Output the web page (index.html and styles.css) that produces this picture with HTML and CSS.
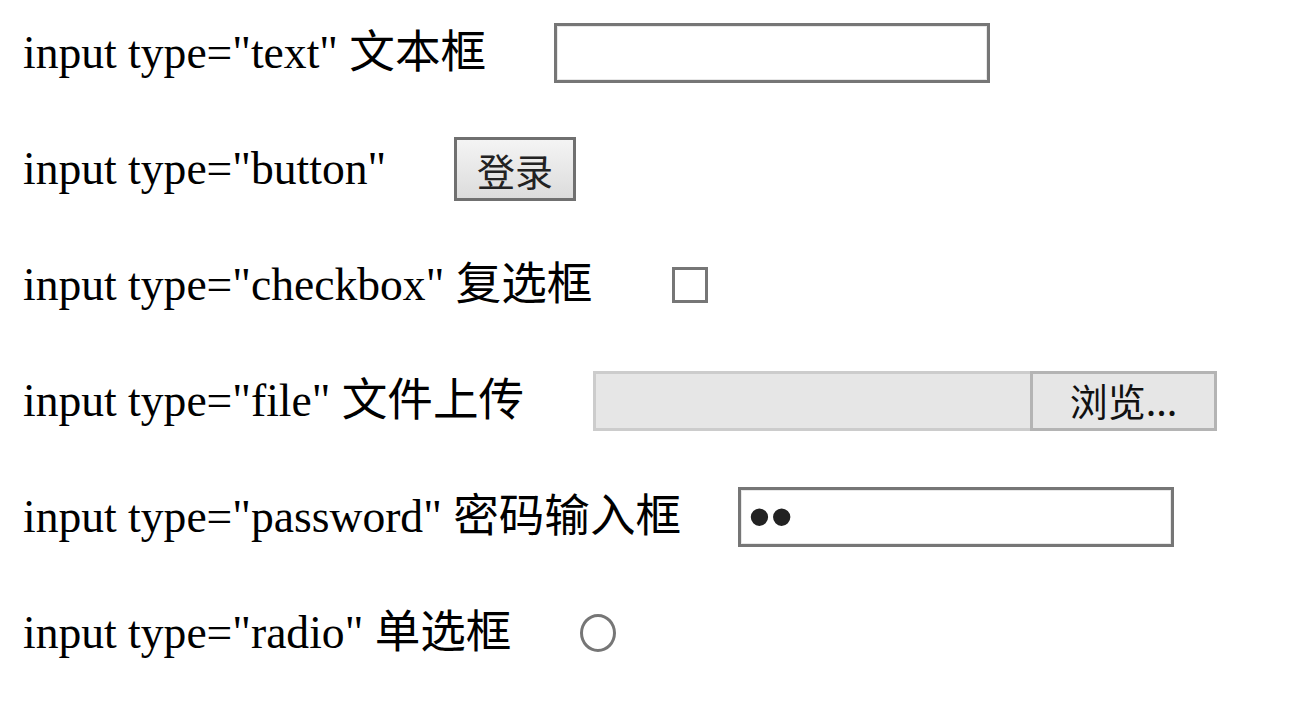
FILE: index.html
```html
<!DOCTYPE html>
<html>
<head>
    <meta charset="utf-8" />
    <title>input 表单元素</title>
    <link rel="stylesheet" href="styles.css">
</head>
<body>
    <div class="form">
        <div class="row">
            <span class="label">input type="text" 文本框</span>
            <input type="text" class="txt gap-text">
        </div>
        <div class="row">
            <span class="label">input type="button"</span>
            <input type="button" class="btn gap-btn" value="登录">
        </div>
        <div class="row">
            <span class="label">input type="checkbox" 复选框</span>
            <input type="checkbox" class="chk gap-chk">
        </div>
        <div class="row">
            <span class="label">input type="file" 文件上传</span>
            <div class="file gap-file">
                <span class="file-name"></span>
                <span class="file-btn">浏览...</span>
            </div>
        </div>
        <div class="row">
            <span class="label">input type="password" 密码输入框</span>
            <input type="password" class="txt pwd gap-pwd" value="12">
        </div>
        <div class="row">
            <span class="label">input type="radio" 单选框</span>
            <input type="radio" class="rad gap-rad">
        </div>
    </div>
</body>
</html>
```

FILE: styles.css
```css
body {
    margin: 0;
    padding: 0;
    background: #fff;
    font: 45.6px "Liberation Serif", "Noto Sans CJK SC", serif;
    color: #000;
}

.form {
    padding: 23px 0 0 23px;
}

.row {
    display: flex;
    align-items: center;
    height: 60px;
    margin-bottom: 56px;
}

.label {
    white-space: nowrap;
    line-height: 1;
}

.txt {
    box-sizing: border-box;
    width: 436px;
    height: 60px;
    margin: 0;
    padding: 0 7px;
    border: 3px solid #767676;
    box-shadow: inset 0 0 0 1px #e8e8e8;
    background: #fff;
    font: 40px "Liberation Sans", sans-serif;
    color: #222;
    outline: none;
}

.pwd {
    font-size: 64px;
    line-height: 54px;
}

.btn {
    box-sizing: border-box;
    width: 122px;
    height: 64px;
    margin: 0;
    padding: 0;
    border: 3px solid #707070;
    background: linear-gradient(#f4f4f4, #dcdcdc);
    font: 38px "Noto Sans CJK SC", sans-serif;
    color: #222;
}

.chk,
.rad {
    -webkit-appearance: none;
    appearance: none;
    box-sizing: border-box;
    width: 36px;
    height: 36px;
    margin: 0;
    border: 3px solid #767676;
    background: #fff;
}

.rad {
    height: 38px;
    border-radius: 50%;
}

.file {
    display: flex;
    height: 60px;
}

.file-name {
    box-sizing: border-box;
    width: 437px;
    height: 60px;
    border: 3px solid #cccccc;
    border-right: 0;
    background: #e6e6e6;
}

.file-btn {
    box-sizing: border-box;
    width: 187px;
    height: 60px;
    border: 3px solid #b4b4b4;
    background: #e6e6e6;
    font: 38px "Noto Sans CJK SC", sans-serif;
    color: #111;
    text-align: center;
    line-height: 52px;
}

.gap-text { margin-left: 68px; }
.gap-btn { margin-left: 68px; }
.gap-chk { margin-left: 80px; }
.gap-file { margin-left: 69px; }
.gap-pwd { margin-left: 57px; }
.gap-rad { margin-left: 69px; }
```
